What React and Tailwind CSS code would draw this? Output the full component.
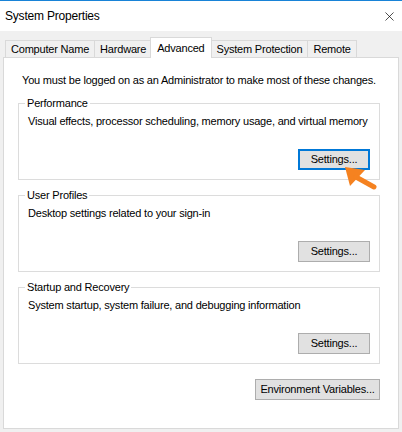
import { X } from "lucide-react";

const tabs = ["Computer Name", "Hardware", "Advanced", "System Protection", "Remote"];

function WinButton({ label, focused, className = "" }) {
  return (
    <button
      className={`h-[21px] flex items-center justify-center text-black ${
        focused
          ? "border-2 border-[#0078d7] bg-[#e1e1e1]"
          : "border border-[#adadad] bg-[#e1e1e1]"
      } ${className}`}
    >
      {label}
    </button>
  );
}

function Group({ title, desc, focused }) {
  return (
    <div className="relative h-[77px] border border-[#dcdcdc] flex flex-col pt-[10px] pr-[9px] pb-[9px] pl-[9px]">
      {/* legend sits over the top border */}
      <span className="absolute -top-[8px] left-[6px] bg-white px-[2px] leading-[15px]">
        {title}
      </span>
      <p className="leading-[15px]">{desc}</p>
      <div className="mt-auto flex justify-end">
        <WinButton label="Settings..." focused={focused} className="w-[72px]" />
      </div>
    </div>
  );
}

export default function App() {
  return (
    <div
      className="relative w-[402px] h-[432px] bg-[#f0f0f0] border-t border-[#1883d7] text-[11px] tracking-[-0.2px] whitespace-nowrap text-black overflow-hidden"
      style={{ fontFamily: '"Liberation Sans", Arial, sans-serif' }}
    >
      {/* Title bar */}
      <div className="h-[30px] bg-white flex items-center justify-between pl-[5px] pr-[5px]">
        <span className="text-[12px]">System Properties</span>
        <X size={15} strokeWidth={1.1} className="text-black" />
      </div>

      <div className="px-[3px] pt-[7px]">
        {/* Tabs */}
        <div className="relative z-10 flex items-end h-[20px] pl-[2px] -mb-px">
          {tabs.map((t) =>
            t === "Advanced" ? (
              <div
                key={t}
                className="h-[21px] px-[6px] flex items-center bg-white border border-b-0 border-[#d9d9d9] -mx-[1px] z-10"
              >
                {t}
              </div>
            ) : (
              <div
                key={t}
                className="h-[18px] px-[5px] flex items-center bg-[#f0f0f0] border border-[#d9d9d9] border-r-0 last:border-r"
              >
                {t}
              </div>
            )
          )}
        </div>

        {/* Tab panel */}
        <div className="h-[372px] bg-white border border-[#d9d9d9] pt-[15px] pl-[14px] pr-[18px]">
          <p className="leading-[15px] pl-[4px]">
            You must be logged on as an Administrator to make most of these changes.
          </p>
          <div className="mt-[15px] flex flex-col gap-[15px]">
            <Group
              title="Performance"
              desc="Visual effects, processor scheduling, memory usage, and virtual memory"
              focused
            />
            <Group title="User Profiles" desc="Desktop settings related to your sign-in" />
            <Group
              title="Startup and Recovery"
              desc="System startup, system failure, and debugging information"
            />
          </div>
          <div className="flex justify-end mt-[15px]">
            <WinButton label="Environment Variables..." className="w-[125px]" />
          </div>
        </div>
      </div>

      {/* Orange pointer arrow */}
      <svg
        className="absolute left-[340px] top-[160px]"
        width="40"
        height="32"
        viewBox="0 0 40 32"
      >
        <polygon points="5,6 25,9 10,25" fill="#f58220" />
        <line x1="16" y1="16" x2="34" y2="26" stroke="#f58220" strokeWidth="5" strokeLinecap="round" />
      </svg>
    </div>
  );
}
